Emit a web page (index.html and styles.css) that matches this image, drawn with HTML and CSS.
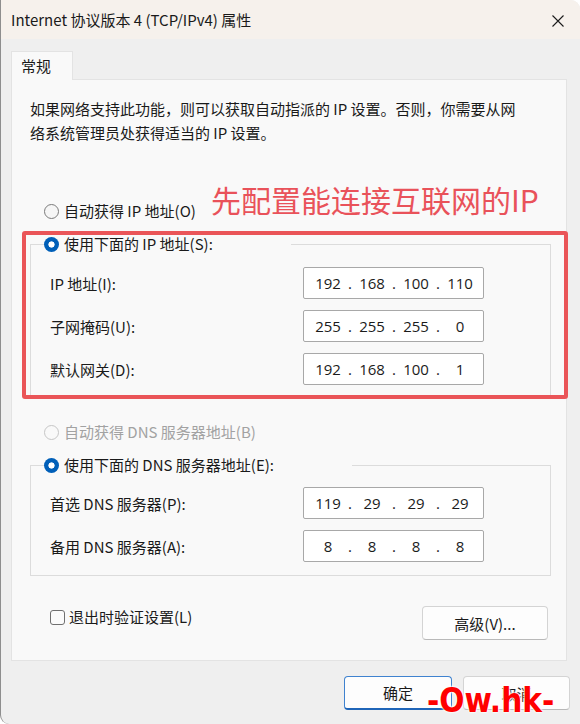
FILE: index.html
```html
<!DOCTYPE html>
<html lang="zh-CN">
<head>
  <meta charset="UTF-8" />
  <title>Internet 协议版本 4 (TCP/IPv4) 属性</title>
  <link rel="stylesheet" href="styles.css">
</head>
<body>

  <div class="window">
    <div class="titlebar">
      <span class="title">Internet 协议版本 4 (TCP/IPv4) 属性</span>
      <svg class="close" width="12" height="12" viewBox="0 0 12 12">
        <path d="M0.5 0.5 L11.5 11.5 M11.5 0.5 L0.5 11.5" stroke="#1c1c1c" stroke-width="1.1" fill="none"/>
      </svg>
    </div>

    <div class="content">
      <div class="tabs">
        <div class="tab">常规</div>
      </div>

      <div class="panel">
        <p class="intro">如果网络支持此功能，则可以获取自动指派的 IP 设置。否则，你需要从网<br>络系统管理员处获得适当的 IP 设置。</p>

        <label class="radio-row first"><span class="radio"></span>自动获得 IP 地址(O)</label>

        <fieldset class="group ip-group">
          <legend><label class="radio-row"><span class="radio checked"></span>使用下面的 IP 地址(S):</label></legend>
          <div class="rows">
            <span>IP 地址(I):</span>
            <div class="ip"><span>192</span><i>.</i><span>168</span><i>.</i><span>100</span><i>.</i><span>110</span></div>
            <span>子网掩码(U):</span>
            <div class="ip"><span>255</span><i>.</i><span>255</span><i>.</i><span>255</span><i>.</i><span>0</span></div>
            <span>默认网关(D):</span>
            <div class="ip"><span>192</span><i>.</i><span>168</span><i>.</i><span>100</span><i>.</i><span>1</span></div>
          </div>
        </fieldset>

        <label class="radio-row disabled"><span class="radio"></span>自动获得 DNS 服务器地址(B)</label>

        <fieldset class="group dns-group">
          <legend><label class="radio-row"><span class="radio checked"></span>使用下面的 DNS 服务器地址(E):</label></legend>
          <div class="rows">
            <span>首选 DNS 服务器(P):</span>
            <div class="ip"><span>119</span><i>.</i><span>29</span><i>.</i><span>29</span><i>.</i><span>29</span></div>
            <span>备用 DNS 服务器(A):</span>
            <div class="ip"><span>8</span><i>.</i><span>8</span><i>.</i><span>8</span><i>.</i><span>8</span></div>
          </div>
        </fieldset>

        <div class="options">
          <label class="check-row"><span class="check"></span>退出时验证设置(L)</label>
          <button class="btn advanced">高级(V)...</button>
        </div>

        <!-- marcação em vermelho por cima do formulário -->
        <div class="note">先配置能连接互联网的IP</div>
        <div class="note-box"></div>
      </div>

      <div class="actions">
        <button class="btn default">确定</button>
        <button class="btn">取消</button>
      </div>
    </div>

    <div class="watermark">-Ow.hk-</div>
  </div>

</body>
</html>
```

FILE: styles.css
```css
body {
  margin: 0;
  background: #fff;
  font-family: "Noto Sans CJK SC", sans-serif;
  font-size: 15px;
  color: #1a1a1a;
}
.window {
  position: relative;
  box-sizing: border-box;
  width: 580px;
  height: 724px;
  background: #efefef;
  border-left: 1px solid #8e8e8e;
  border-radius: 0 9px 0 9px;
  overflow: hidden;
}
.titlebar {
  height: 39px;
  background: #f6f1ec;
  display: flex;
  align-items: center;
  justify-content: space-between;
  padding: 0 16px 0 10px;
}
.title { font-size: 15px; }
.close { margin-top: 2px; }

.content { padding: 12px 13px 0 10px; }
.tabs { display: flex; }
.tab {
  height: 28px;
  line-height: 28px;
  padding: 0 21px 0 9px;
  background: #f9f9f9;
  border: 1px solid #e3e3e3;
  border-bottom: none;
  margin-bottom: -1px;
  position: relative;
  z-index: 1;
}
.panel {
  position: relative;
  box-sizing: border-box;
  height: 582px;
  background: #f9f9f9;
  border: 1px solid #e3e3e3;
  padding: 17px 15px 20px 18px;
}
.intro { margin: 0; line-height: 23.5px; }

.radio-row {
  display: flex;
  align-items: center;
  gap: 5px;
  height: 22px;
  line-height: 22px;
  padding-left: 14px;
  white-space: nowrap;
}
.radio-row.first { margin-top: 56px; }
.radio-row.disabled { margin-top: 25px; color: #a2a2a2; }
.radio {
  box-sizing: border-box;
  flex: none;
  width: 15px;
  height: 15px;
  border-radius: 50%;
  border: 1px solid #7b7b7b;
  background: #f6f6f6;
}
.radio-row.disabled .radio { border-color: #c6c6c6; background: #f9f9f9; }
.radio.checked {
  border: none;
  background: radial-gradient(circle, #fff 0 2.8px, #005fb8 3.4px);
}

.group {
  margin: 11px 0 0;
  padding: 12px 66px 10px 19px;
  border: 1px solid #dcdcdc;
  min-width: 0;
}
.dns-group { padding-top: 11px; padding-bottom: 13px; }
.group legend {
  padding: 0 78px 0 0;
  margin-left: -6px;
  background: #f9f9f9;
}
.group legend .radio-row { padding-left: 0; }

.rows {
  display: grid;
  grid-template-columns: 1fr 181px;
  row-gap: 11px;
  align-items: center;
}
.ip {
  box-sizing: border-box;
  height: 32px;
  background: #fff;
  border: 1px solid #a8a8a8;
  border-radius: 2px;
  display: grid;
  grid-template-columns: 30px 14px 30px 14px 30px 14px 30px;
  align-items: center;
  padding-left: 9px;
  text-align: center;
  font-family: "Open Sans", "Noto Sans CJK SC", sans-serif;
  font-size: 15px;
  color: #1b1b1b;
}
.ip i { font-style: normal; }

.options {
  display: flex;
  justify-content: space-between;
  align-items: flex-start;
  margin-top: 30px;
  padding: 0 3px 0 20px;
}
.check-row {
  display: flex;
  align-items: center;
  gap: 4px;
  height: 22px;
  line-height: 22px;
}
.check {
  box-sizing: border-box;
  width: 15px;
  height: 15px;
  border: 1px solid #707070;
  border-radius: 3px;
  background: #fbfbfb;
}

.btn {
  box-sizing: border-box;
  height: 34px;
  width: 107px;
  background: #fdfdfd;
  border: 1px solid #d4d4d4;
  border-bottom-color: #b9b9b9;
  border-radius: 4px;
  font-family: inherit;
  font-size: 15px;
  color: #1a1a1a;
  padding: 0;
}
.btn.advanced { width: 126px; }
.btn.default {
  width: 108px;
  border: 1px solid #3f82cf;
  border-bottom: 2px solid #1f65b8;
}
.actions {
  display: flex;
  justify-content: flex-end;
  gap: 11px;
  margin: 15px -3px 0 0;
}

.note {
  position: absolute;
  left: 199px;
  top: 104px;
  font-size: 30px;
  line-height: 30px;
  color: #e9525a;
  white-space: nowrap;
}
.note-box {
  position: absolute;
  left: 10px;
  top: 151px;
  width: 546px;
  height: 168px;
  box-sizing: border-box;
  border: 4px solid #ea5558;
  border-radius: 3px;
}

.watermark {
  position: absolute;
  left: 426px;
  top: 681px;
  font-family: "DejaVu Sans Condensed", "DejaVu Sans", sans-serif;
  font-weight: bold;
  font-size: 33px;
  line-height: 40px;
  color: #ff0000;
  text-shadow: 0 0 2px #fff, 0 0 2px #fff, 0 0 3px #fff;
}
```
